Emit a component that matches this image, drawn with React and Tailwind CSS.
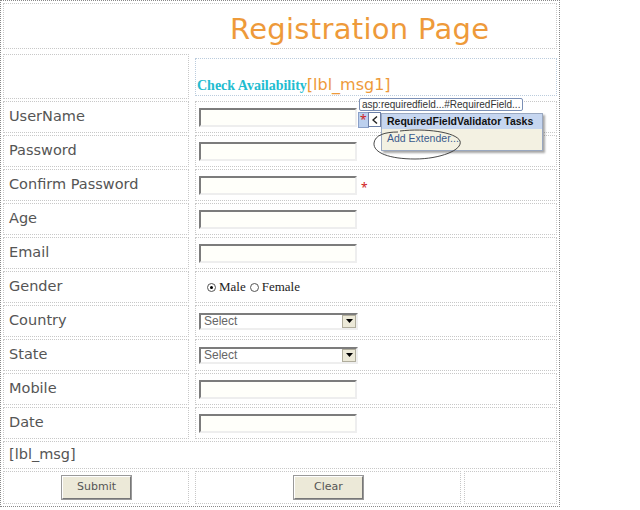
import React from 'react';

const font = "font-['DejaVu_Sans',Verdana,sans-serif]";

const Cell = ({ className = '', children }) => (
    <div className={`border border-dotted border-[#c8c8c8] ${className}`}>{children}</div>
);

const TextBox = () => (
    <div className="w-[158px] h-[19px] bg-[#fffffa] border-2 border-t-[#7c7c7c] border-l-[#7c7c7c] border-b-[#eeeeee] border-r-[#eeeeee]" />
);

const Select = () => (
    <div className="w-[159px] h-[17px] flex bg-white border-2 border-t-[#7c7c7c] border-l-[#7c7c7c] border-b-[#eeeeee] border-r-[#eeeeee]">
        <span className="flex-1 pl-[3px] leading-[13px] text-[12px] text-[#666] font-['Liberation_Sans',Arial,sans-serif]">Select</span>
        <span className="w-[14px] h-[13px] bg-[#ece9d8] border border-[#b0ad9c] flex items-center justify-center">
            <svg width="7" height="4" viewBox="0 0 7 4"><path d="M0 0h7L3.5 4z" fill="#000" /></svg>
        </span>
    </div>
);

const Radio = ({ checked }) => (
    <span className="w-[9px] h-[9px] rounded-full border border-[#555] bg-white flex items-center justify-center">
        {checked && <span className="w-[3px] h-[3px] rounded-full bg-black" />}
    </span>
);

const Button = ({ children }) => (
    <div className="w-[69px] h-[23px] bg-[#ece9d8] border border-t-[#fff] border-l-[#fff] border-b-[#777] border-r-[#777] outline outline-1 outline-[#999] flex items-center justify-center text-[11px] text-[#555] font-['DejaVu_Sans',Tahoma,sans-serif]">
        {children}
    </div>
);

const Row = ({ label, children }) => (
    <div className="flex gap-[6px] h-[32px]">
        <Cell className={`w-[186px] flex items-center pl-[5px] text-[14.5px] text-[#555] ${font}`}>{label}</Cell>
        <Cell className="flex-1 flex items-center pl-[3px]">{children}</Cell>
    </div>
);

const Star = () => <span className="ml-[4px] mt-[6px] text-[#d02020] text-[12px] leading-none">*</span>;

export default function App() {
    return (
        <div className="w-[640px] h-[510px] bg-white relative overflow-hidden">
            <div className="w-[560px] border border-dotted border-[#888] p-[2px] flex flex-col gap-[2px]">
                {/* Title */}
                <Cell className="h-[46px] flex items-center pl-[226px] pt-[8px]">
                    <span className={`text-[29px] text-[#ee9a3a] tracking-[0.3px] ${font}`}>Registration Page</span>
                </Cell>

                {/* Check availability */}
                <div className="flex gap-[6px] h-[48px]">
                    <Cell className="w-[186px] mt-[3px]" />
                    <div className="flex-1 pt-[7px]">
                        <div className="h-[38px] border border-dotted border-[#bcd] flex items-end pl-[1px]">
                            <span className="text-[14px] font-bold text-[#22bcd0] font-['Liberation_Serif','Times_New_Roman',serif] leading-[18px]">Check Availability</span>
                            <span className={`text-[16px] text-[#ee9a3a] leading-[20px] ${font}`}>[lbl_msg1]</span>
                        </div>
                    </div>
                </div>

                <Row label="UserName"><TextBox /></Row>
                <Row label="Password"><TextBox /></Row>
                <Row label="Confirm Password"><TextBox /><Star /></Row>
                <Row label="Age"><TextBox /></Row>
                <Row label="Email"><TextBox /></Row>
                <Row label="Gender">
                    <div className="flex items-center pl-[8px] text-[13px] text-[#222] font-['Liberation_Serif','Times_New_Roman',serif]">
                        <Radio checked />
                        <span className="ml-[3px]">Male</span>
                        <span className="ml-[4px]"><Radio /></span>
                        <span className="ml-[3px]">Female</span>
                    </div>
                </Row>
                <Row label="Country"><Select /></Row>
                <Row label="State"><Select /></Row>
                <Row label="Mobile"><TextBox /></Row>
                <Row label="Date"><TextBox /></Row>

                <Cell className={`h-[28px] flex items-center pl-[5px] text-[14.5px] text-[#555] ${font}`}>[lbl_msg]</Cell>

                {/* Buttons */}
                <div className="flex gap-[3px] h-[33px]">
                    <Cell className="w-[186px] flex items-center pl-[58px]"><Button>Submit</Button></Cell>
                    <Cell className="w-[266px] flex items-center pl-[98px] ml-[3px]"><Button>Clear</Button></Cell>
                    <Cell className="flex-1" />
                </div>
            </div>

            {/* Smart tag overlay */}
            <div className="absolute left-[359px] top-[98px] h-[13px] px-[2px] whitespace-nowrap bg-white border border-[#7b8fb5] rounded-[2px] text-[10px] leading-[11px] text-[#333] font-['Liberation_Sans',Tahoma,sans-serif]">
                asp:requiredfield...#RequiredField...
            </div>
            <div className="absolute left-[358px] top-[112px] w-[11px] h-[16px] bg-[#bcd0ee] border border-[#8aa0c8] text-[#d02020] text-[12px] leading-[14px] pl-[1px]">*</div>
            <div className="absolute left-[368px] top-[112px] w-[13px] h-[15px] bg-white border border-[#6b7fa8] flex items-center justify-center">
                <svg width="6" height="8" viewBox="0 0 6 8"><path d="M5 0.5L1 4l4 3.5" stroke="#222" strokeWidth="1.4" fill="none" /></svg>
            </div>
            <div className="absolute left-[381px] top-[113px] w-[162px] shadow-[2px_2px_2px_rgba(0,0,0,0.35)] border border-[#9aa8c0]">
                <div className="h-[15px] bg-[#c6d6f0] pl-[5px] whitespace-nowrap text-[10.5px] font-bold text-[#111] leading-[15px] font-['Liberation_Sans',Tahoma,sans-serif]">
                    RequiredFieldValidator Tasks
                </div>
                <div className="h-[21px] bg-[#f3f1e2] pl-[5px] whitespace-nowrap text-[10.5px] leading-[18px] text-[#3a5a8c] font-['Liberation_Sans',Tahoma,sans-serif]">
                    Add Extender...
                </div>
            </div>
            <svg className="absolute left-[370px] top-[128px]" width="96" height="34" viewBox="0 0 96 34">
                <path d="M30 3C55 0 86 4 90 13C93 22 70 31 45 31C20 31 3 25 4 15C5 7 15 4 28 4" stroke="#333" strokeWidth="0.9" fill="none" />
            </svg>
        </div>
    );
}
